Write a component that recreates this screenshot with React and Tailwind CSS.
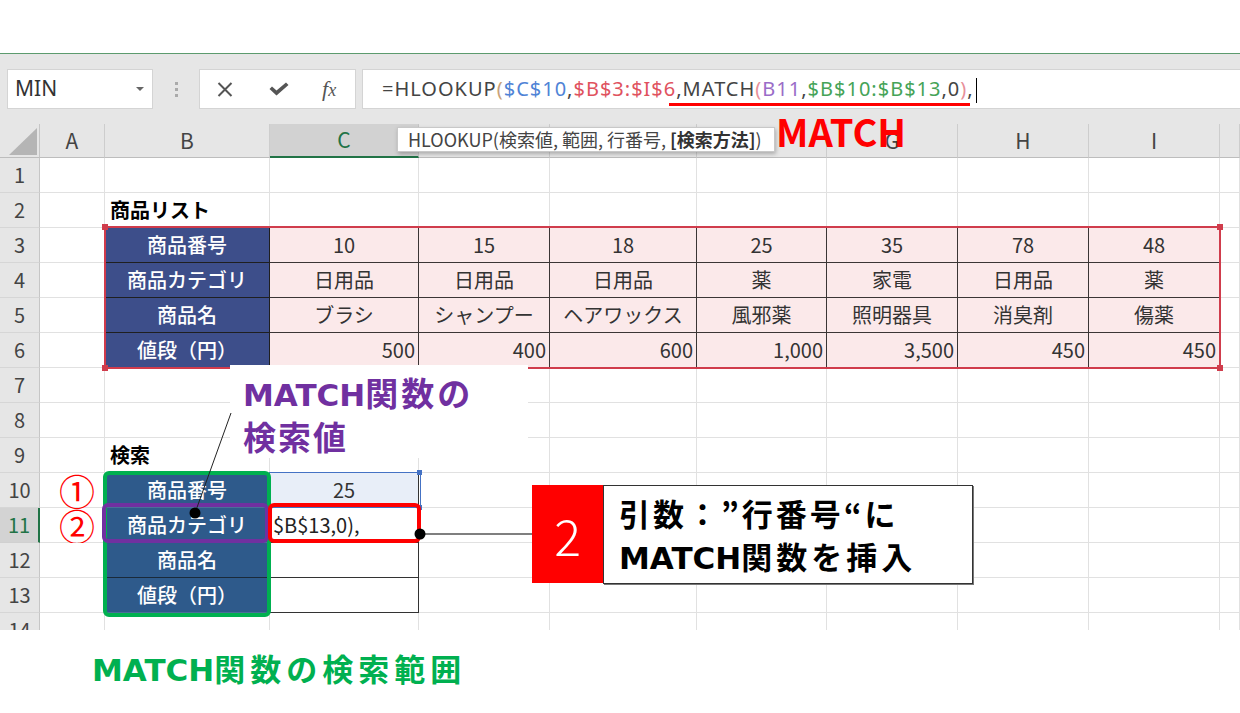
import React from 'react';

// Excel screen: HLOOKUP + MATCH annotated walkthrough
const LETTERS = ['', 'A', 'B', 'C', 'D', 'E', 'F', 'G', 'H', 'I', ''];

const TABLE = {
  3: ['商品番号', '10', '15', '18', '25', '35', '78', '48'],
  4: ['商品カテゴリ', '日用品', '日用品', '日用品', '薬', '家電', '日用品', '薬'],
  5: ['商品名', 'ブラシ', 'シャンプー', 'ヘアワックス', '風邪薬', '照明器具', '消臭剤', '傷薬'],
  6: ['値段（円）', '500', '400', '600', '1,000', '3,500', '450', '450'],
};

const SEARCH = { 10: '商品番号', 11: '商品カテゴリ', 12: '商品名', 13: '値段（円）' };

const HeaderCell = ({ c }) => {
  if (c === 0) {
    return (
      <div className="relative bg-[#e6e6e6] border-r border-b border-r-[#c6c6c6] border-b-[#bdbdbd]">
        <svg className="absolute left-[9px] top-[4px]" width="28" height="27" viewBox="0 0 28 27">
          <polygon points="28,0 28,27 0,27" fill="#b5b5b5" />
        </svg>
      </div>
    );
  }
  const selected = c === 3;
  return (
    <div
      className={
        selected
          ? 'flex items-center justify-center bg-[#d2d2d2] border-r border-b-2 border-r-[#c6c6c6] border-b-[#217346] text-[#217346] text-[21px]'
          : 'flex items-center justify-center bg-[#e6e6e6] border-r border-b border-r-[#cdcdcd] border-b-[#bdbdbd] text-[#444] text-[21px]'
      }
    >
      {LETTERS[c]}
    </div>
  );
};

const Cell = ({ r, c }) => {
  const base = 'flex items-center whitespace-nowrap overflow-hidden text-[20px] border-r border-b';

  // row headers
  if (c === 0) {
    if (r === 11) {
      return (
        <div className="flex items-center justify-center bg-[#d3d3d3] border-r-2 border-b border-r-[#217346] border-b-[#d0d0d0] text-[#217346] text-[20px]">
          {r}
        </div>
      );
    }
    return (
      <div className="flex items-center justify-center bg-[#e6e6e6] border-r border-b border-r-[#c6c6c6] border-b-[#d6d6d6] text-[#444] text-[20px]">
        {r}
      </div>
    );
  }

  // product table
  if (r >= 3 && r <= 6 && c >= 2 && c <= 9) {
    const v = TABLE[r][c - 2];
    if (c === 2) {
      return (
        <div className={`${base} justify-center bg-[#3d4e8a] text-white font-medium border-r-[#1f1f1f] border-b-[#1f1f1f]`}>
          {v}
        </div>
      );
    }
    return (
      <div
        className={`${base} bg-[#fbe9ea] text-[#333] border-r-[#3b3535] border-b-[#3b3535] ${
          r === 6 ? 'justify-end pr-[3px]' : 'justify-center'
        }`}
      >
        {v}
      </div>
    );
  }

  if (c === 2 && (r === 2 || r === 9)) {
    return (
      <div className={`${base} pl-[5px] font-bold text-black border-r-[#e1e1e1] border-b-[#e1e1e1]`}>
        {r === 2 ? '商品リスト' : '検索'}
      </div>
    );
  }

  // search block
  if (c === 2 && r >= 10 && r <= 13) {
    return (
      <div
        className={`${base} justify-center bg-[#2e5a8b] text-white font-medium border-r-[#1f1f1f] ${
          r === 12 ? 'border-b-[#1a2a3a]' : 'border-b-[#4a6f98]'
        }`}
      >
        {SEARCH[r]}
      </div>
    );
  }
  if (c === 3 && r >= 10 && r <= 13) {
    if (r === 10) {
      return (
        <div className={`${base} justify-center bg-[#e8eef8] text-[#333] border-r-[#333] border-b-[#333]`}>25</div>
      );
    }
    return (
      <div className={`${base} pl-[3px] bg-white text-[#222] border-r-[#333] border-b-[#333]`}>
        {r === 11 ? '$B$13,0),' : ''}
      </div>
    );
  }
  if (c === 1 && (r === 10 || r === 11)) {
    return (
      <div className="flex items-center justify-center pl-[10px] text-[#ff0000] text-[36px] leading-none border-r border-b border-r-[#e1e1e1] border-b-[#e1e1e1]">
        {r === 10 ? '①' : '②'}
      </div>
    );
  }

  return <div className={`${base} bg-white border-r-[#e1e1e1] border-b-[#e1e1e1]`} />;
};

const FormulaBar = () => (
  <div className="h-[71px] bg-[#e6e6e6] border-t border-[#5c9b6e] flex items-start pt-[15px]">
    {/* name box */}
    <div className="ml-[7px] w-[146px] h-[40px] bg-white border border-[#d4d4d4] flex items-center justify-between pl-[7px] pr-[8px]">
      <span className="text-[21px] text-[#333] font-['Noto_Sans',sans-serif]">MIN</span>
      <svg width="8" height="5" viewBox="0 0 8 5">
        <polygon points="0,0 8,0 4,4" fill="#666" />
      </svg>
    </div>
    {/* grip dots */}
    <div className="w-[46px] h-[40px] flex flex-col items-center justify-center gap-[3px]">
      <span className="w-[3px] h-[3px] bg-[#aaa]" />
      <span className="w-[3px] h-[3px] bg-[#aaa]" />
      <span className="w-[3px] h-[3px] bg-[#aaa]" />
    </div>
    {/* cancel / enter / fx */}
    <div className="w-[157px] h-[40px] bg-white border border-[#d4d4d4] flex items-center">
      <svg className="ml-[17px]" width="16" height="15" viewBox="0 0 16 15">
        <path d="M1.5 1 L14.5 14 M14.5 1 L1.5 14" stroke="#555" strokeWidth="2" fill="none" />
      </svg>
      <svg className="ml-[36px]" width="20" height="14" viewBox="0 0 20 14">
        <path d="M0.5 7 L3 4.5 L7.5 8.5 L17 0.5 L19.5 3 L7.5 13.5 Z" fill="#555" />
      </svg>
      <span className="ml-[33px] text-[22px] italic text-[#555] font-['Liberation_Serif',serif] leading-none">
        f<span className="text-[18px]">x</span>
      </span>
    </div>
    {/* formula input */}
    <div className="ml-[6px] flex-1 h-[40px] bg-white border border-r-0 border-[#d4d4d4] pl-[19px] leading-[38px] whitespace-nowrap font-['Noto_Sans',sans-serif] text-[20px] tracking-[1px] text-[#444]">
      <span>=HLOOKUP</span>
      <span className="text-[#c9a27a]">(</span>
      <span className="text-[#4f83d6]">$C$10</span>
      <span>,</span>
      <span className="text-[#e0525e]">$B$3:$I$6</span>
      <span className="relative inline-block">
        <span>,MATCH</span>
        <span className="text-[#e8909a]">(</span>
        <span className="text-[#9a6cc8]">B11</span>
        <span>,</span>
        <span className="text-[#45a357]">$B$10:$B$13</span>
        <span>,0</span>
        <span className="text-[#e8909a]">)</span>
        <span className="absolute left-[-7px] right-[-3px] top-[33px] h-[3px] bg-[#ff0000]" />
      </span>
      <span>,</span>
      <span className="inline-block w-[1.5px] h-[25px] bg-black align-middle ml-[2px]" />
    </div>
  </div>
);

const Sheet = () => {
  const cells = [];
  for (let c = 0; c < 11; c++) cells.push(<HeaderCell key={`h${c}`} c={c} />);
  for (let r = 1; r <= 14; r++) {
    for (let c = 0; c < 11; c++) cells.push(<Cell key={`${r}-${c}`} r={r} c={c} />);
  }
  return (
    <div className="relative h-[506px] overflow-hidden">
      <div className="grid grid-cols-[40px_65px_165px_149px_131px_147px_130px_131px_131px_131px_20px] grid-rows-[34px_repeat(14,35px)]">
        {cells}
      </div>

      {/* range highlight B3:I6 */}
      <div className="absolute left-[104px] top-[102px] w-[1117px] h-[143px] border-2 border-[#d03c4c]" />
      <div className="absolute left-[102px] top-[100px] w-[6px] h-[6px] bg-[#d03c4c]" />
      <div className="absolute left-[1217px] top-[100px] w-[6px] h-[6px] bg-[#d03c4c]" />
      <div className="absolute left-[102px] top-[241px] w-[6px] h-[6px] bg-[#d03c4c]" />
      <div className="absolute left-[1217px] top-[241px] w-[6px] h-[6px] bg-[#d03c4c]" />

      {/* C10 reference */}
      <div className="absolute left-[269px] top-[348px] w-[152px] h-[36px] border border-[#4472c4]" />
      <div className="absolute left-[417px] top-[346px] w-[5px] h-[5px] bg-[#4472c4]" />
      <div className="absolute left-[417px] top-[381px] w-[5px] h-[5px] bg-[#4472c4]" />

      {/* green range B10:B13 */}
      <div className="absolute left-[103px] top-[347px] w-[168px] h-[146px] border-4 border-[#00b050] rounded-[6px]" />
      {/* purple B11 */}
      <div className="absolute left-[102px] top-[379px] w-[167px] h-[40px] border-4 border-[#7030a0] rounded-[6px]" />
      {/* red C11 */}
      <div className="absolute left-[268px] top-[379px] w-[153px] h-[40px] border-4 border-[#ff0000] rounded-[6px]" />

      {/* annotation: lookup value */}
      <div className="absolute left-[230px] top-[241px] w-[298px] h-[93px] bg-white pl-[13px] pt-[7px] font-['DejaVu_Sans','Noto_Sans_CJK_JP',sans-serif] font-bold text-[31px] leading-[41px] text-[#7030a0]">
        <div className="whitespace-nowrap">
          MATCH<span className="text-[33px] tracking-[3px] font-['Noto_Sans_CJK_JP',sans-serif]">関数の</span>
        </div>
        <div className="whitespace-nowrap text-[33px] tracking-[2px] font-['Noto_Sans_CJK_JP',sans-serif]">検索値</div>
      </div>

      <svg className="absolute left-0 top-0" width="1240" height="506">
        <line x1="231" y1="289" x2="195" y2="389" stroke="#222" strokeWidth="1" />
        <circle cx="195" cy="389" r="5.5" fill="#000" />
        <line x1="420" y1="410" x2="533" y2="410" stroke="#555" strokeWidth="1.5" />
        <circle cx="420" cy="410" r="5.5" fill="#000" />
      </svg>

      {/* callout */}
      <div className="absolute left-[532px] top-[361px] w-[71px] h-[98px] bg-[#ff0000] flex items-center justify-center text-white text-[50px] font-light leading-none">
        2
      </div>
      <div className="absolute left-[603px] top-[361px] w-[370px] h-[99px] bg-white border border-[#333] shadow-[1px_1px_0_#777] pl-[15px] pt-[5px] font-['DejaVu_Sans','Noto_Sans_CJK_JP',sans-serif] font-bold text-[31px] leading-[43px] text-black">
        <div className="whitespace-nowrap tracking-[3px] font-['Noto_Sans_CJK_JP',sans-serif]">引数：”行番号“に</div>
        <div className="whitespace-nowrap">
          MATCH<span className="tracking-[4px] font-['Noto_Sans_CJK_JP',sans-serif]">関数を挿入</span>
        </div>
      </div>
    </div>
  );
};

export default function App() {
  return (
    <div className="relative w-[1240px] h-[713px] overflow-hidden bg-white font-['Noto_Sans_CJK_JP',sans-serif]">
      <div className="h-[53px] bg-white" />
      <FormulaBar />
      <Sheet />
      <div className="pl-[92px] pt-[18px] leading-[40px] whitespace-nowrap font-['DejaVu_Sans','Noto_Sans_CJK_JP',sans-serif] font-bold text-[31px] text-[#00b050]">
        MATCH<span className="tracking-[5px] font-['Noto_Sans_CJK_JP',sans-serif]">関数の検索範囲</span>
      </div>

      {/* function tooltip */}
      <div className="absolute left-[397px] top-[127px] w-[378px] h-[25px] bg-white border border-[#c8c8c8] shadow-[1px_2px_4px_rgba(0,0,0,0.25)] pl-[10px] leading-[23px] text-[18px] text-[#444] whitespace-nowrap">
        HLOOKUP(検索値, 範囲, 行番号, <span className="font-bold text-[#333]">[検索方法]</span>)
      </div>

      {/* red caption */}
      <div className="absolute left-[776px] top-[112px] text-[38px] leading-none font-bold text-[#ff0000]">MATCH</div>
    </div>
  );
}
